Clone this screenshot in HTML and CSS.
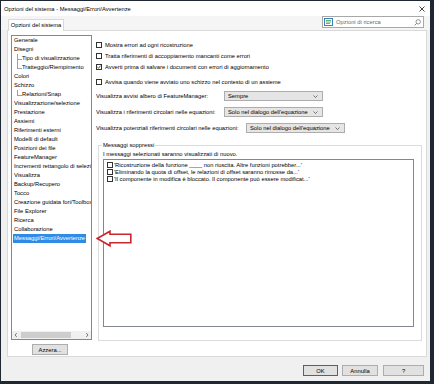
FILE: index.html
```html
<!DOCTYPE html>
<html lang="it">
<head>
    <meta charset="UTF-8">
    <meta name="viewport" content="width=device-width, initial-scale=1.0">
    <title>Opzioni del sistema - Messaggi/Errori/Avvertenze</title>
    <link rel="stylesheet" href="styles.css">
</head>
<body>
    <div class="window">
        <div class="titlebar">
            <span class="title">Opzioni del sistema - Messaggi/Errori/Avvertenze</span>
            <svg class="close" width="6" height="6" viewBox="0 0 6 6"><path d="M0.5 0.5 L5.5 5.5 M5.5 0.5 L0.5 5.5" stroke="#333" stroke-width="0.9"/></svg>
        </div>

        <div class="tabrow">
            <div class="tab">Opzioni del sistema</div>
            <div class="search">
                <svg class="search-icon" width="9" height="8" viewBox="0 0 9 8">
                    <rect x="0.5" y="0.5" width="8" height="7" fill="#fff" stroke="#3f7fbf"/>
                    <path d="M2 2.5 H7 M2 4 H7 M2 5.5 H6" stroke="#3aa14a" stroke-width="0.8"/>
                </svg>
                <span class="search-text">Opzioni di ricerca</span>
                <svg class="lens" width="7" height="7" viewBox="0 0 7 7">
                    <circle cx="4.2" cy="2.8" r="2.2" fill="none" stroke="#777" stroke-width="0.8"/>
                    <path d="M2.6 4.4 L0.6 6.4" stroke="#777" stroke-width="0.9"/>
                </svg>
            </div>
        </div>

        <div class="page">
            <div class="leftcol">
                <div class="tree">
                    <ul class="items">
                        <li>Generale</li>
                        <li>Disegni</li>
                        <li class="child mid">Tipo di visualizzazione</li>
                        <li class="child">Tratteggio/Riempimento</li>
                        <li>Colori</li>
                        <li>Schizzo</li>
                        <li class="child">Relazioni/Snap</li>
                        <li>Visualizzazione/selezione</li>
                        <li>Prestazione</li>
                        <li>Assiemi</li>
                        <li>Riferimenti esterni</li>
                        <li>Modelli di default</li>
                        <li>Posizioni dei file</li>
                        <li>FeatureManager</li>
                        <li>Incrementi rettangolo di selezione</li>
                        <li>Visualizza</li>
                        <li>Backup/Recupero</li>
                        <li>Tocco</li>
                        <li>Creazione guidata fori/Toolbox</li>
                        <li>File Explorer</li>
                        <li>Ricerca</li>
                        <li>Collaborazione</li>
                        <li><span class="selected">Messaggi/Errori/Avvertenze</span></li>
                    </ul>
                    <div class="hscroll">
                        <svg width="6" height="8" viewBox="0 0 6 8"><path d="M3.8 2 L2 4 L3.8 6" fill="none" stroke="#606060" stroke-width="0.8"/></svg>
                        <span class="thumb"></span>
                        <svg width="6" height="8" viewBox="0 0 6 8"><path d="M2.2 2 L4 4 L2.2 6" fill="none" stroke="#606060" stroke-width="0.8"/></svg>
                    </div>
                </div>
                <button class="btn reset">Azzera...</button>
            </div>

            <div class="rightcol">
                <label class="check"><span class="box"></span>Mostra errori ad ogni ricostruzione</label>
                <label class="check"><span class="box"></span>Tratta riferimenti di accoppiamento mancanti come errori</label>
                <label class="check"><span class="box checked"><svg width="4" height="4" viewBox="0 0 4 4"><path d="M0.3 2 L1.5 3.2 L3.7 0.6" fill="none" stroke="#222" stroke-width="0.8"/></svg></span>Avverti prima di salvare i documenti con errori di aggiornamento</label>
                <label class="check spaced"><span class="box"></span>Avvisa quando viene avviato uno schizzo nel contesto di un assieme</label>

                <div class="field first">
                    <span class="lbl">Visualizza avvisi albero di FeatureManager:</span>
                    <span class="combo">Sempre<svg width="5" height="3" viewBox="0 0 5 3"><path d="M0.5 0.5 L2.5 2.5 L4.5 0.5" fill="none" stroke="#444" stroke-width="0.7"/></svg></span>
                </div>
                <div class="field">
                    <span class="lbl">Visualizza i riferimenti circolari nelle equazioni:</span>
                    <span class="combo">Solo nel dialogo dell'equazione<svg width="5" height="3" viewBox="0 0 5 3"><path d="M0.5 0.5 L2.5 2.5 L4.5 0.5" fill="none" stroke="#444" stroke-width="0.7"/></svg></span>
                </div>
                <div class="field">
                    <span class="lbl wide">Visualizza potenziali riferimenti circolari nelle equazioni:</span>
                    <span class="combo">Solo nel dialogo dell'equazione<svg width="5" height="3" viewBox="0 0 5 3"><path d="M0.5 0.5 L2.5 2.5 L4.5 0.5" fill="none" stroke="#444" stroke-width="0.7"/></svg></span>
                </div>

                <fieldset class="group">
                    <legend>Messaggi soppressi</legend>
                    <p class="hint">I messaggi selezionati saranno visualizzati di nuovo.</p>
                    <div class="msglist">
                        <label class="msg"><span class="box"></span>'Ricostruzione della funzione ____ non riuscita. Altre funzioni potrebber...'</label>
                        <label class="msg"><span class="box"></span>'Eliminando la quota di offset, le relazioni di offset saranno rimosse da...'</label>
                        <label class="msg"><span class="box"></span>'Il componente in modifica è bloccato. Il componente può essere modificat...'</label>
                    </div>
                </fieldset>
            </div>
        </div>

        <div class="footer">
            <button class="btn ok">OK</button>
            <button class="btn cancel">Annulla</button>
            <button class="btn help">?</button>
        </div>
    </div>

    <svg class="arrow" width="36" height="18" viewBox="0 0 36 18">
        <path d="M1.2 8.5 L14 1.2 L14 4.2 L34.8 4.2 L34.8 12.8 L14 12.8 L14 15.8 Z" fill="#fff" stroke="#c8262d" stroke-width="1.6" stroke-linejoin="miter"/>
    </svg>
</body>
</html>
```

FILE: styles.css
```css
* {
    box-sizing: border-box;
}
body {
    margin: 0;
    width: 434px;
    height: 384px;
    overflow: hidden;
    background-color: #1e2732;
    font-family: "Liberation Sans", Arial, sans-serif;
    font-size: 5.8px;
    color: #000;
    position: relative;
}
.window {
    margin: 1px 0 0 1px;
    width: 429px;
    height: 380px;
    background-color: #f0f0f0;
    display: flex;
    flex-direction: column;
}
.titlebar {
    height: 15px;
    background-color: #fff;
    display: flex;
    align-items: center;
    justify-content: space-between;
    padding: 1px 5px 0 3px;
}
.tabrow {
    height: 14px;
    display: flex;
    align-items: flex-start;
    background-color: #f5f5f5;
}
.tab {
    margin: 3px 0 -1px 7px;
    width: 56px;
    height: 12px;
    border: 1px solid #d9d9d9;
    border-bottom: none;
    background-color: #fff;
    line-height: 10px;
    text-align: center;
    position: relative;
    z-index: 1;
}
.search {
    margin-left: auto;
    margin-right: 6px;
    width: 102px;
    height: 12px;
    border: 1px solid #a8a8a8;
    background-color: #fff;
    display: flex;
    align-items: center;
    padding: 0 2px 0 1px;
}
.search-text {
    margin-left: 3px;
    color: #6a6a6a;
}
.lens {
    margin-left: auto;
}
.page {
    margin-left: 6px;
    width: 420px;
    height: 327px;
    border: 1px solid #d9d9d9;
    background-color: #fff;
    display: flex;
    padding: 4px 0 0 3px;
}
.leftcol {
    width: 81px;
    display: flex;
    flex-direction: column;
}
.tree {
    height: 305px;
    border: 1px solid #828790;
    display: flex;
    flex-direction: column;
    overflow: hidden;
}
.items {
    list-style: none;
    margin: 0;
    padding: 0;
    flex: 1;
    white-space: nowrap;
    overflow: hidden;
}
.items li {
    height: 9px;
    line-height: 9px;
    padding-left: 2px;
}
.items li.child {
    padding-left: 10px;
    position: relative;
}
.items li.child::before {
    content: "";
    position: absolute;
    left: 5px;
    top: 0;
    width: 4px;
    height: 5px;
    border-left: 1px solid #a0a0a0;
    border-bottom: 1px solid #a0a0a0;
}
.items li.mid::after {
    content: "";
    position: absolute;
    left: 5px;
    top: 5px;
    height: 4px;
    border-left: 1px solid #a0a0a0;
}
.selected {
    display: inline-block;
    margin-left: -1px;
    padding: 0 1px;
    background-color: #2e8be6;
    color: #fff;
}
.hscroll {
    height: 8px;
    background-color: #f0f0f0;
    display: flex;
    align-items: center;
    justify-content: space-between;
    padding: 0 1px;
}
.thumb {
    flex: 1;
    height: 6px;
    margin: 0 13px 0 2px;
    background-color: #cdcdcd;
}
.btn {
    font-family: "Liberation Sans", Arial, sans-serif;
    font-size: 5.8px;
    color: #000;
    height: 11px;
    padding: 0;
    background-color: #e1e1e1;
    border: 1px solid #adadad;
}
.reset {
    margin: 4px 0 0 21px;
    width: 36px;
}
.rightcol {
    margin-left: 4px;
    width: 326px;
    padding-top: 4px;
    display: flex;
    flex-direction: column;
}
.check {
    height: 11px;
    display: flex;
    align-items: center;
}
.check.spaced {
    margin-top: 4px;
}
.box {
    width: 6px;
    height: 6px;
    border: 1px solid #333;
    background-color: #fff;
    margin-right: 3px;
    flex-shrink: 0;
    display: flex;
    align-items: center;
    justify-content: center;
}
.field {
    height: 10px;
    margin-top: 6px;
    display: flex;
    align-items: center;
}
.field.first {
    margin-top: 4px;
}
.lbl {
    width: 128px;
}
.lbl.wide {
    width: 150px;
}
.combo {
    width: 99px;
    height: 10px;
    background-color: #e5e5e5;
    border: 1px solid #adadad;
    display: flex;
    align-items: center;
    justify-content: space-between;
    padding: 0 4px 0 3px;
}
.group {
    margin: 8px 0 0 2px;
    width: 324px;
    border: 1px solid #dcdcdc;
    padding: 0 7px 13px 4px;
}
.group legend {
    padding: 0 1px;
    margin-left: -1px;
    line-height: 8px;
}
.hint {
    margin: 1px 0 0 0;
    line-height: 8px;
}
.msglist {
    margin-top: 1px;
    height: 168px;
    border: 1px solid #828790;
    padding: 1px 0 0 3px;
}
.msg {
    height: 7px;
    display: flex;
    align-items: center;
    white-space: nowrap;
}
.msg .box {
    margin-right: 1px;
}
.footer {
    height: 24px;
    display: flex;
    justify-content: flex-end;
    padding: 8px 6px 0 0;
}
.ok {
    width: 35px;
    margin-right: 4px;
    border-color: #0078d7;
}
.cancel {
    width: 36px;
    margin-right: 5px;
}
.help {
    width: 41px;
}
.arrow {
    position: absolute;
    left: 96px;
    top: 230px;
}
```
